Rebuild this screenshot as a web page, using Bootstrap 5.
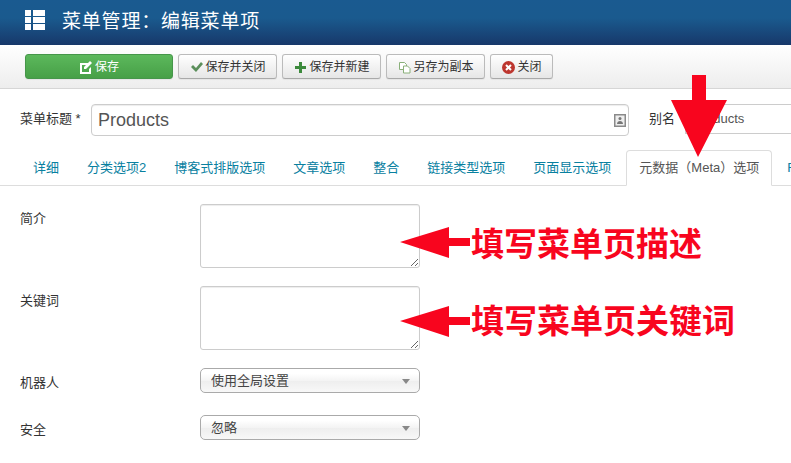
<!DOCTYPE html>
<html lang="zh">
<head>
  <meta charset="UTF-8" />
  <title>菜单管理：编辑菜单项</title>
  <link href="https://cdn.jsdelivr.net/npm/bootstrap@5.3.3/dist/css/bootstrap.min.css" rel="stylesheet" />
  <style>
    html, body { height: 463px; overflow: hidden; }
    body {
      position: relative;
      font-family: "Liberation Sans", "Noto Sans CJK SC", sans-serif;
      font-size: 13px;
      color: #333;
      background: #fff;
    }
    .page-head {
      height: 45px;
      padding-left: 25px;
      gap: 17px;
      color: #fff;
      background: linear-gradient(#1a5a90, #1a5a8e 40%, #17386a);
    }
    .page-head svg { margin-bottom: 5px; }
    .page-head h1 { font-size: 19px; font-weight: 400; margin: 0; letter-spacing: .8px; }
    .tool-bar {
      height: 44px;
      padding: 9px 0 0 25px;
      gap: 5px;
      background: linear-gradient(#fff, #ededed);
      border-bottom: 1px solid #d6d6d6;
    }
    .tool-btn {
      height: 25px;
      padding: 1px 10.5px 0;
      gap: 3px;
      font-size: 12px;
      color: #333;
      border: 1px solid #bbb;
      border-bottom-color: #a9a9a9;
      border-radius: 3px;
      background: linear-gradient(#fff, #e6e6e6);
      box-shadow: 0 1px 1px rgba(0, 0, 0, .05);
    }
    .tool-btn.is-save {
      width: 148px;
      color: #fff;
      border-color: #46964a;
      background: linear-gradient(#5cb85c, #47a047);
    }
    .title-row { padding: 15px 0 0 20px; height: 61px; }
    .title-row label { width: 71px; padding-top: 5px; }
    .title-box {
      width: 538px;
      height: 32px;
      padding: 0 2px 0 6px;
      font-size: 18px;
      color: #555;
      border: 1px solid #ccc;
      border-radius: 4px;
      box-shadow: inset 0 1px 1px rgba(0, 0, 0, .075);
    }
    .title-row .alias-label { margin-left: 20px; width: 36px; }
    .alias-box {
      flex: 1;
      height: 30px;
      padding: 0 7px;
      font-size: 13px;
      color: #555;
      border: 1px solid #ccc;
      border-right: 0;
    }
    .tab-row { padding-left: 20px; height: 36px; border-bottom: 1px solid #ddd; flex-wrap: nowrap; }
    .tab-row .nav-link {
      height: 36px;
      margin-right: 2px;
      padding: 0 12px;
      font-size: 13px;
      line-height: 34px;
      white-space: nowrap;
      color: #08809f;
      border: 1px solid transparent;
      border-radius: 4px 4px 0 0;
    }
    .tab-row .nav-link.active { color: #555; background: #fff; border-color: #ddd #ddd #fff; }
    .form-area { padding: 18px 0 0 20px; }
    .field-row { display: flex; }
    .field-row label { width: 180px; padding-top: 5px; }
    .field-row textarea {
      display: block;
      width: 220px;
      height: 64px;
      margin-bottom: 18px;
      border: 1px solid #ccc;
      border-radius: 3px;
      box-shadow: inset 0 1px 1px rgba(0, 0, 0, .075);
    }
    .pick-box {
      width: 220px;
      height: 25px;
      margin-bottom: 22px;
      padding: 1px 9px 0 10px;
      font-size: 13px;
      color: #444;
      border: 1px solid #aaa;
      border-radius: 5px;
      background: linear-gradient(#fff 20%, #f4f4f4 50%, #eee 52%, #f8f8f8);
    }
    .pick-box i { border: 4px solid transparent; border-top: 5px solid #888; border-bottom: 0; }
    .overlay-art { position: absolute; left: 0; top: 0; pointer-events: none; }
    .red-note {
      position: absolute;
      left: 471px;
      font-size: 33px;
      line-height: 40px;
      font-weight: 700;
      color: #f8051e;
      white-space: nowrap;
    }
    .note-one { top: 225px; }
    .note-two { top: 302px; }
  </style>
</head>
<body>
  <header class="page-head d-flex align-items-center">
    <svg width="20" height="20" viewBox="0 0 20 20" fill="#fff"><path d="M0 0h6v6H0zM8 0h12v6H8zM0 7h6v6H0zM8 7h12v6H8zM0 14h6v6H0zM8 14h12v6H8z"/></svg>
    <h1>菜单管理：编辑菜单项</h1>
  </header>

  <div class="tool-bar d-flex align-items-start">
    <div class="tool-btn is-save d-flex align-items-center justify-content-center">
      <svg width="13" height="13" viewBox="0 0 13 13"><path d="M1 2h8v2H3v7h7V8l2-2v7H1z" fill="#fff" fill-rule="evenodd"/><path d="M5 6l6-6 2 2-6 6H5z" fill="#fff"/></svg>
      <span>保存</span>
    </div>
    <div class="tool-btn d-flex align-items-center">
      <svg width="13" height="12" viewBox="0 0 13 12"><path d="M1 6l2-2 3 3 5-6 2 2-7 8z" fill="#5b8f5b"/></svg>
      <span>保存并关闭</span>
    </div>
    <div class="tool-btn d-flex align-items-center">
      <svg width="13" height="13" viewBox="0 0 13 13"><path d="M5 1h3v4h4v3H8v4H5V8H1V5h4z" fill="#3c8a3c"/></svg>
      <span>保存并新建</span>
    </div>
    <div class="tool-btn d-flex align-items-center">
      <svg width="13" height="13" viewBox="0 0 13 13" fill="#fff" stroke="#8ab07a"><path d="M1.500 1.500h5l2 2v5h-7z"/><path d="M5.500 5h4l2.500 2.500v4.500h-6.500z"/></svg>
      <span>另存为副本</span>
    </div>
    <div class="tool-btn d-flex align-items-center">
      <svg width="13" height="13" viewBox="0 0 13 13"><circle cx="6.500" cy="6.500" r="6.500" fill="#bd362f"/><path d="M4 4l5 5M9 4l-5 5" stroke="#fff" stroke-width="2"/></svg>
      <span>关闭</span>
    </div>
  </div>

  <div class="title-row d-flex">
    <label>菜单标题 *</label>
    <div class="title-box d-flex align-items-center justify-content-between">
      <span>Products</span>
      <svg width="12" height="13" viewBox="0 0 12 13"><rect x=".75" y=".75" width="10.500" height="11.500" fill="#eee" stroke="#8a8a8a" stroke-width="1.500"/><circle cx="6" cy="4.500" r="1.500" fill="#777"/><path d="M3 10c0-2 1.500-3 3-3s3 1 3 3z" fill="#777"/></svg>
    </div>
    <label class="alias-label">别名</label>
    <div class="alias-box d-flex align-items-center">Products</div>
  </div>

  <ul class="nav tab-row">
    <li class="nav-item"><a class="nav-link" href="#">详细</a></li>
    <li class="nav-item"><a class="nav-link" href="#">分类选项2</a></li>
    <li class="nav-item"><a class="nav-link" href="#">博客式排版选项</a></li>
    <li class="nav-item"><a class="nav-link" href="#">文章选项</a></li>
    <li class="nav-item"><a class="nav-link" href="#">整合</a></li>
    <li class="nav-item"><a class="nav-link" href="#">链接类型选项</a></li>
    <li class="nav-item"><a class="nav-link" href="#">页面显示选项</a></li>
    <li class="nav-item"><a class="nav-link active" href="#">元数据（Meta）选项</a></li>
    <li class="nav-item"><a class="nav-link" href="#">FAQ</a></li>
  </ul>

  <div class="form-area">
    <div class="field-row"><label>简介</label><textarea></textarea></div>
    <div class="field-row"><label>关键词</label><textarea></textarea></div>
    <div class="field-row">
      <label>机器人</label>
      <div class="pick-box d-flex align-items-center justify-content-between"><span>使用全局设置</span><i></i></div>
    </div>
    <div class="field-row">
      <label>安全</label>
      <div class="pick-box d-flex align-items-center justify-content-between"><span>忽略</span><i></i></div>
    </div>
  </div>

  <svg class="overlay-art" width="791" height="463" fill="#f8051e">
    <path d="M692 75h14v25h21l-29 57-27-57h21z"/>
    <path d="M400 242l49-15v11h21v8h-21v12z"/>
    <path d="M400 321l49-15v11h21v8h-21v12z"/>
  </svg>
  <div class="red-note note-one">填写菜单页描述</div>
  <div class="red-note note-two">填写菜单页关键词</div>

  <script src="https://cdn.jsdelivr.net/npm/bootstrap@5.3.3/dist/js/bootstrap.bundle.min.js"></script>
</body>
</html>
